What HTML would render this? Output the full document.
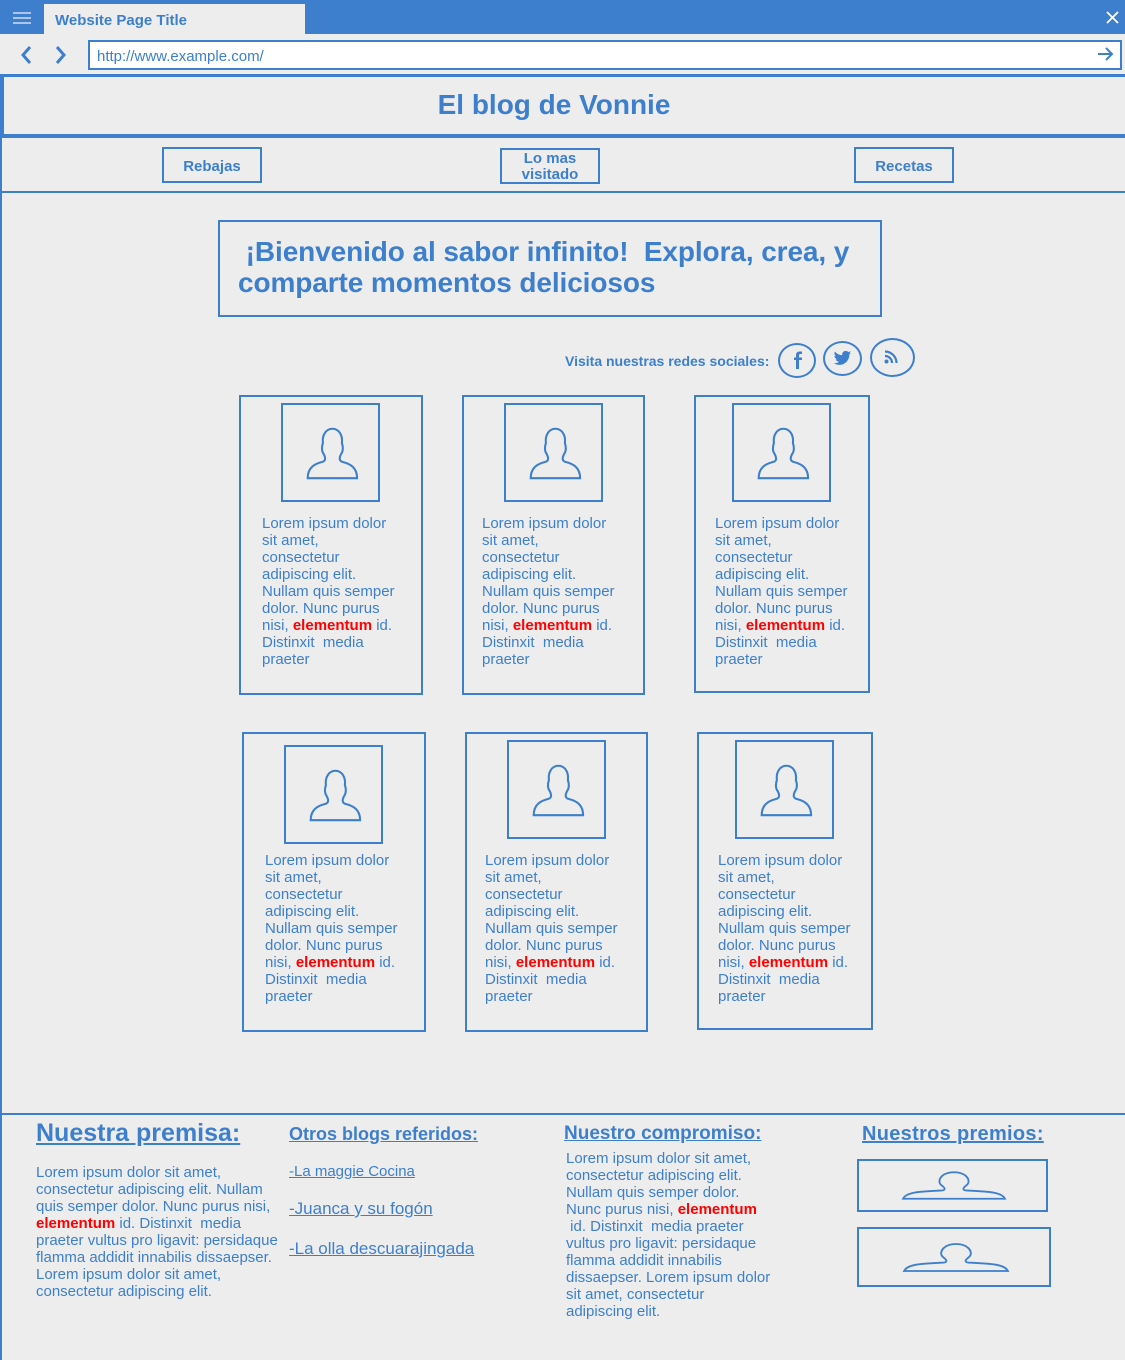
<!DOCTYPE html>
<html><head><meta charset="utf-8">
<style>
*{margin:0;padding:0;box-sizing:border-box}
body{width:1125px;height:1360px;background:#ededed;font-family:"Liberation Sans",Arial,sans-serif;color:#3d7fcc;position:relative;overflow:hidden}
.a{position:absolute}
.b{border:2px solid #3d7fcc}
.card{position:absolute;border:2px solid #3d7fcc}
.img{position:absolute;border:2px solid #3d7fcc;width:99px;height:99px}
.txt{position:absolute;font-size:15px;line-height:17px;width:170px;white-space:nowrap}
.r{color:#f00;font-weight:bold}
.btn{position:absolute;border:2px solid #3d7fcc;font-weight:bold;font-size:15px;text-align:center}
u{text-decoration:underline}
</style></head><body>
<svg width="0" height="0" style="position:absolute"><defs>
<symbol id="p" viewBox="0 0 100 100"><path d="M26,77 C26,66 33,62 41,60 C45,59 45,56 43,52 C40,48 41,43 42,40 C41,32 45,25 52,25 C59,25 63,32 62,40 C63,43 64,48 61,52 C59,56 59,59 63,60 C71,62 78,66 78,77 Z" fill="none" stroke="#3d7fcc" stroke-width="2.2"/></symbol>
<symbol id="q" viewBox="0 0 104 30"><path d="M2,28 C5,22 15,21 38,20 C44,20 44,18 40,15 C36,12 38,8 40,6 C43,3 48,2 52,2 C56,2 61,3 64,6 C66,8 68,12 64,15 C60,18 60,20 66,20 C89,21 99,22 102,28 Z" fill="none" stroke="#3d7fcc" stroke-width="1.8"/></symbol>
</defs></svg>

<div class="a" style="left:0;top:0;width:1125px;height:34px;background:#3d7fcc"></div>
<div class="a" style="left:13px;top:12px;width:18px;height:2px;background:#a9c6ea;box-shadow:0 5px 0 #a9c6ea,0 10px 0 #a9c6ea"></div>
<div class="a" style="left:44px;top:4px;width:261px;height:30px;background:#ededed;font-weight:bold;font-size:15px;padding:8px 0 0 11px">Website Page Title</div>
<svg class="a" style="left:1106px;top:11px" width="13" height="13"><path d="M1,1 L12,12 M12,1 L1,12" stroke="#fff" stroke-width="1.8"/></svg>
<div class="a" style="left:0;top:34px;width:1125px;height:40px;background:#ededed"></div>
<svg class="a" style="left:16px;top:44px" width="60" height="22"><path d="M14,3 L7,11 L14,19" fill="none" stroke="#3d7fcc" stroke-width="3"/><path d="M41,3 L48,11 L41,19" fill="none" stroke="#3d7fcc" stroke-width="3"/></svg>
<div class="a" style="left:88px;top:40px;width:1034px;height:30px;background:#fff;border:2px solid #3d7fcc;font-size:15px;padding:6px 0 0 7px">http://www.example.com/</div>
<svg class="a" style="left:1097px;top:46px" width="18" height="16"><path d="M1,8 H15 M9,2 L15,8 L9,14" fill="none" stroke="#3d7fcc" stroke-width="2"/></svg>

<div class="a" style="left:0;top:74px;width:1125px;height:3px;background:#3d7fcc"></div>
<div class="a" style="left:0;top:74px;width:4px;height:64px;background:#3d7fcc"></div>
<div class="a" style="left:0;top:134px;width:1125px;height:4px;background:#3d7fcc"></div>
<div class="a" style="left:0;top:89px;width:1108px;text-align:center;font-weight:bold;font-size:28px">El blog de Vonnie</div>

<div class="a" style="left:0;top:138px;width:2px;height:1222px;background:#3d7fcc"></div>
<div class="a" style="left:0;top:191px;width:1125px;height:2px;background:#3d7fcc"></div>
<div class="btn" style="left:162px;top:147px;width:100px;height:36px;padding-top:9px">Rebajas</div>
<div class="btn" style="left:500px;top:148px;width:100px;height:36px;line-height:16px;padding-top:1px;font-size:15px">Lo mas<br>visitado</div>
<div class="btn" style="left:854px;top:147px;width:100px;height:36px;padding-top:9px">Recetas</div>

<div class="a b" style="left:218px;top:220px;width:664px;height:97px"></div>
<div class="a" style="left:238px;top:236px;width:640px;font-weight:bold;font-size:28px;line-height:31px;letter-spacing:-0.1px;white-space:nowrap">&nbsp;¡Bienvenido al sabor infinito!&nbsp; Explora, crea, y<br>comparte momentos deliciosos</div>

<div class="a" style="left:565px;top:353px;font-weight:bold;font-size:14px">Visita nuestras redes sociales:</div>
<div class="a" style="left:778px;top:343px;width:38px;height:35px;border:2px solid #3d7fcc;border-radius:50%"></div>
<svg class="a" style="left:791px;top:351px" width="12" height="19" viewBox="0 0 12 19"><path d="M8,18 V9 H11 V6.5 H8 V4.5 C8,3.5 8.5,3 9.5,3 H11 V0.5 H8.5 C6,0.5 5,2 5,4.5 V6.5 H3 V9 H5 V18 Z" fill="#3d7fcc"/></svg>
<div class="a" style="left:823px;top:341px;width:39px;height:35px;border:2px solid #3d7fcc;border-radius:50%"></div>
<svg class="a" style="left:833px;top:350px" width="19" height="17" viewBox="0 0 24 20"><path d="M23,2.5c-.8.4-1.7.6-2.6.7.9-.6 1.6-1.4 2-2.5-.9.5-1.9.9-2.9 1.1C18.6.9 17.4.3 16.1.3c-2.5 0-4.5 2-4.5 4.5 0 .4 0 .7.1 1C7.9 5.6 4.6 3.8 2.4 1.1c-.4.7-.6 1.4-.6 2.300 0 1.6.8 2.9 2 3.7-.7 0-1.4-.2-2-.6 0 2.2 1.6 4 3.600 4.400-.4.1-.8.2-1.2.2-.3 0-.6 0-.8-.1.6 1.8 2.2 3.1 4.2 3.1-1.5 1.2-3.5 1.9-5.6 1.9H1c2 1.3 4.4 2 6.9 2 8.3 0 12.8-6.9 12.8-12.8v-.6c.9-.6 1.7-1.4 2.3-2.3z" fill="#3d7fcc"/></svg>
<div class="a" style="left:870px;top:338px;width:45px;height:39px;border:2px solid #3d7fcc;border-radius:50%"></div>
<svg class="a" style="left:884px;top:350px" width="15" height="14" viewBox="0 0 15 14"><circle cx="2.5" cy="11.5" r="2" fill="#3d7fcc"/><path d="M1,6 A7,7 0 0 1 8,13 M1,1.5 A11.5,11.5 0 0 1 12.5,13" fill="none" stroke="#3d7fcc" stroke-width="2.2"/></svg>

<div class="card" style="left:239px;top:395px;width:184px;height:300px"></div>
<div class="img" style="left:281px;top:403px"><svg width="95" height="95"><use href="#p"/></svg></div>
<div class="txt" style="left:262px;top:515px">Lorem ipsum dolor<br>sit amet,<br>consectetur<br>adipiscing elit.<br>Nullam quis semper<br>dolor. Nunc purus<br>nisi, <span class="r">elementum</span> id.<br>Distinxit&nbsp; media<br>praeter</div>

<div class="card" style="left:462px;top:395px;width:183px;height:300px"></div>
<div class="img" style="left:504px;top:403px"><svg width="95" height="95"><use href="#p"/></svg></div>
<div class="txt" style="left:482px;top:515px">Lorem ipsum dolor<br>sit amet,<br>consectetur<br>adipiscing elit.<br>Nullam quis semper<br>dolor. Nunc purus<br>nisi, <span class="r">elementum</span> id.<br>Distinxit&nbsp; media<br>praeter</div>

<div class="card" style="left:694px;top:395px;width:176px;height:298px"></div>
<div class="img" style="left:732px;top:403px"><svg width="95" height="95"><use href="#p"/></svg></div>
<div class="txt" style="left:715px;top:515px">Lorem ipsum dolor<br>sit amet,<br>consectetur<br>adipiscing elit.<br>Nullam quis semper<br>dolor. Nunc purus<br>nisi, <span class="r">elementum</span> id.<br>Distinxit&nbsp; media<br>praeter</div>

<div class="card" style="left:242px;top:732px;width:184px;height:300px"></div>
<div class="img" style="left:284px;top:745px"><svg width="95" height="95"><use href="#p"/></svg></div>
<div class="txt" style="left:265px;top:852px">Lorem ipsum dolor<br>sit amet,<br>consectetur<br>adipiscing elit.<br>Nullam quis semper<br>dolor. Nunc purus<br>nisi, <span class="r">elementum</span> id.<br>Distinxit&nbsp; media<br>praeter</div>

<div class="card" style="left:465px;top:732px;width:183px;height:300px"></div>
<div class="img" style="left:507px;top:740px"><svg width="95" height="95"><use href="#p"/></svg></div>
<div class="txt" style="left:485px;top:852px">Lorem ipsum dolor<br>sit amet,<br>consectetur<br>adipiscing elit.<br>Nullam quis semper<br>dolor. Nunc purus<br>nisi, <span class="r">elementum</span> id.<br>Distinxit&nbsp; media<br>praeter</div>

<div class="card" style="left:697px;top:732px;width:176px;height:298px"></div>
<div class="img" style="left:735px;top:740px"><svg width="95" height="95"><use href="#p"/></svg></div>
<div class="txt" style="left:718px;top:852px">Lorem ipsum dolor<br>sit amet,<br>consectetur<br>adipiscing elit.<br>Nullam quis semper<br>dolor. Nunc purus<br>nisi, <span class="r">elementum</span> id.<br>Distinxit&nbsp; media<br>praeter</div>

<div class="a" style="left:0;top:1113px;width:1125px;height:2px;background:#3d7fcc"></div>
<div class="a" style="left:36px;top:1119px;font-weight:bold;font-size:25px"><u>Nuestra premisa:</u></div>
<div class="a" style="left:36px;top:1164px;width:250px;font-size:15px;line-height:17px;white-space:nowrap">Lorem ipsum dolor sit amet,<br>consectetur adipiscing elit. Nullam<br>quis semper dolor. Nunc purus nisi,<br><span class="r">elementum</span> id. Distinxit&nbsp; media<br>praeter vultus pro ligavit: persidaque<br>flamma addidit innabilis dissaepser.<br>Lorem ipsum dolor sit amet,<br>consectetur adipiscing elit.</div>

<div class="a" style="left:289px;top:1124px;font-weight:bold;font-size:18px"><u>Otros blogs referidos:</u></div>
<div class="a" style="left:289px;top:1163px;font-size:15px"><u>-La maggie Cocina</u></div>
<div class="a" style="left:289px;top:1199px;font-size:17px"><u>-Juanca y su fogón</u></div>
<div class="a" style="left:289px;top:1239px;font-size:17px"><u>-La olla descuarajingada</u></div>

<div class="a" style="left:564px;top:1123px;font-weight:bold;font-size:19px"><u>Nuestro compromiso:</u></div>
<div class="a" style="left:566px;top:1150px;font-size:15px;line-height:17px;white-space:nowrap">Lorem ipsum dolor sit amet,<br>consectetur adipiscing elit.<br>Nullam quis semper dolor.<br>Nunc purus nisi, <span class="r">elementum</span><br>&nbsp;id. Distinxit&nbsp; media praeter<br>vultus pro ligavit: persidaque<br>flamma addidit innabilis<br>dissaepser. Lorem ipsum dolor<br>sit amet, consectetur<br>adipiscing elit.</div>

<div class="a" style="left:862px;top:1123px;font-weight:bold;font-size:20px;letter-spacing:0.3px"><u>Nuestros premios:</u></div>
<div class="a b" style="left:857px;top:1159px;width:191px;height:53px"></div>
<svg class="a" style="left:901px;top:1170px" width="106" height="31"><use href="#q"/></svg>
<div class="a b" style="left:857px;top:1227px;width:194px;height:60px"></div>
<svg class="a" style="left:902px;top:1241px" width="108" height="33"><use href="#q"/></svg>
</body></html>
